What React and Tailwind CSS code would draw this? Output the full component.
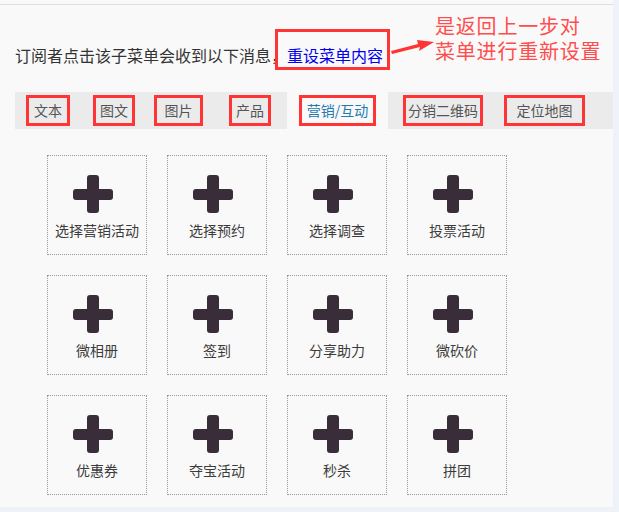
import React from "react";

const tabsLeft = [
  { label: "文本", ml: "ml-[11px]", w: "w-[44px]" },
  { label: "图文", ml: "ml-[23px]", w: "w-[42px]" },
  { label: "图片", ml: "ml-[19px]", w: "w-[49px]" },
  { label: "产品", ml: "ml-[26px]", w: "w-[42px]" },
];

const tabsRight = [
  { label: "分销二维码", ml: "ml-[15px]", w: "w-[80px]" },
  { label: "定位地图", ml: "ml-[21px]", w: "w-[81px]" },
];

const cards = [
  "选择营销活动",
  "选择预约",
  "选择调查",
  "投票活动",
  "微相册",
  "签到",
  "分享助力",
  "微砍价",
  "优惠券",
  "夺宝活动",
  "秒杀",
  "拼团",
];

const PlusIcon = () => (
  <svg width="40" height="38" viewBox="0 0 40 38" className="ml-[25px]">
    <rect x="14" y="0" width="12" height="38" rx="3" fill="#3a2d3a" />
    <rect x="0" y="14" width="40" height="11" rx="3" fill="#3a2d3a" />
  </svg>
);

const Tab = ({ label, ml, w, active }) => (
  <div
    className={`${ml} ${w} h-[31px] border-[3px] border-[#ff3535] flex items-center justify-center text-[14px] ${
      active ? "text-[#2479b0]" : "text-[#555]"
    }`}
  >
    {label}
  </div>
);

export default function App() {
  return (
    <div
      className="w-[619px] h-[512px] bg-[#eef3f9] overflow-hidden"
      style={{ fontFamily: '"Noto Sans CJK SC", "Noto Sans", sans-serif' }}
    >
      <div className="w-[613px] h-[507px] bg-[#f9f9f9] pt-[4px]">
        <div className="h-[88px] border-t border-[#dcdfe4] relative">
          <div className="absolute left-[15px] top-[39px] text-[16px] leading-[22px] text-[#333] whitespace-nowrap">
            订阅者点击该子菜单会收到以下消息，
            <span className="relative text-[#0000ee]">
              重设菜单内容
              <span className="absolute left-[-12px] top-[-14px] w-[115px] h-[41px] border-[3px] border-[#ff3535]"></span>
            </span>
          </div>
          {/* arrow */}
          <svg className="absolute left-[390px] top-[31px]" width="46" height="24" viewBox="0 0 46 24">
            <path d="M2 18 L30 11 L29 15 L44 6 L27 4 L28 8 L1 15 Z" fill="#ff3535" />
          </svg>
          <div className="absolute left-[435px] top-[8px] text-[20px] leading-[25px] tracking-[0.8px] text-[#ff4d4d] whitespace-nowrap">
            <div>是返回上一步对</div>
            <div>菜单进行重新设置</div>
          </div>
        </div>

        <div className="ml-[15px] h-[37px] flex">
          <div className="w-[272px] bg-[#ebebeb] flex items-center">
            {tabsLeft.map((t) => (
              <Tab key={t.label} {...t} />
            ))}
          </div>
          <div className="w-[101px] flex items-center">
            <Tab label="营销/互动" ml="ml-[12px]" w="w-[77px]" active />
          </div>
          <div className="flex-1 bg-[#ebebeb] flex items-center">
            {tabsRight.map((t) => (
              <Tab key={t.label} {...t} />
            ))}
          </div>
        </div>

        <div className="ml-[47px] mt-[26px] grid grid-cols-[repeat(4,100px)] gap-[20px]">
          {cards.map((c) => (
            <div
              key={c}
              className="w-[100px] h-[100px] border border-dotted border-[#9a9a9a] flex flex-col pt-[19px]"
            >
              <PlusIcon />
              <div className="mt-[7px] text-center text-[14px] leading-[20px] text-[#3c3c3c]">{c}</div>
            </div>
          ))}
        </div>
      </div>
    </div>
  );
}
